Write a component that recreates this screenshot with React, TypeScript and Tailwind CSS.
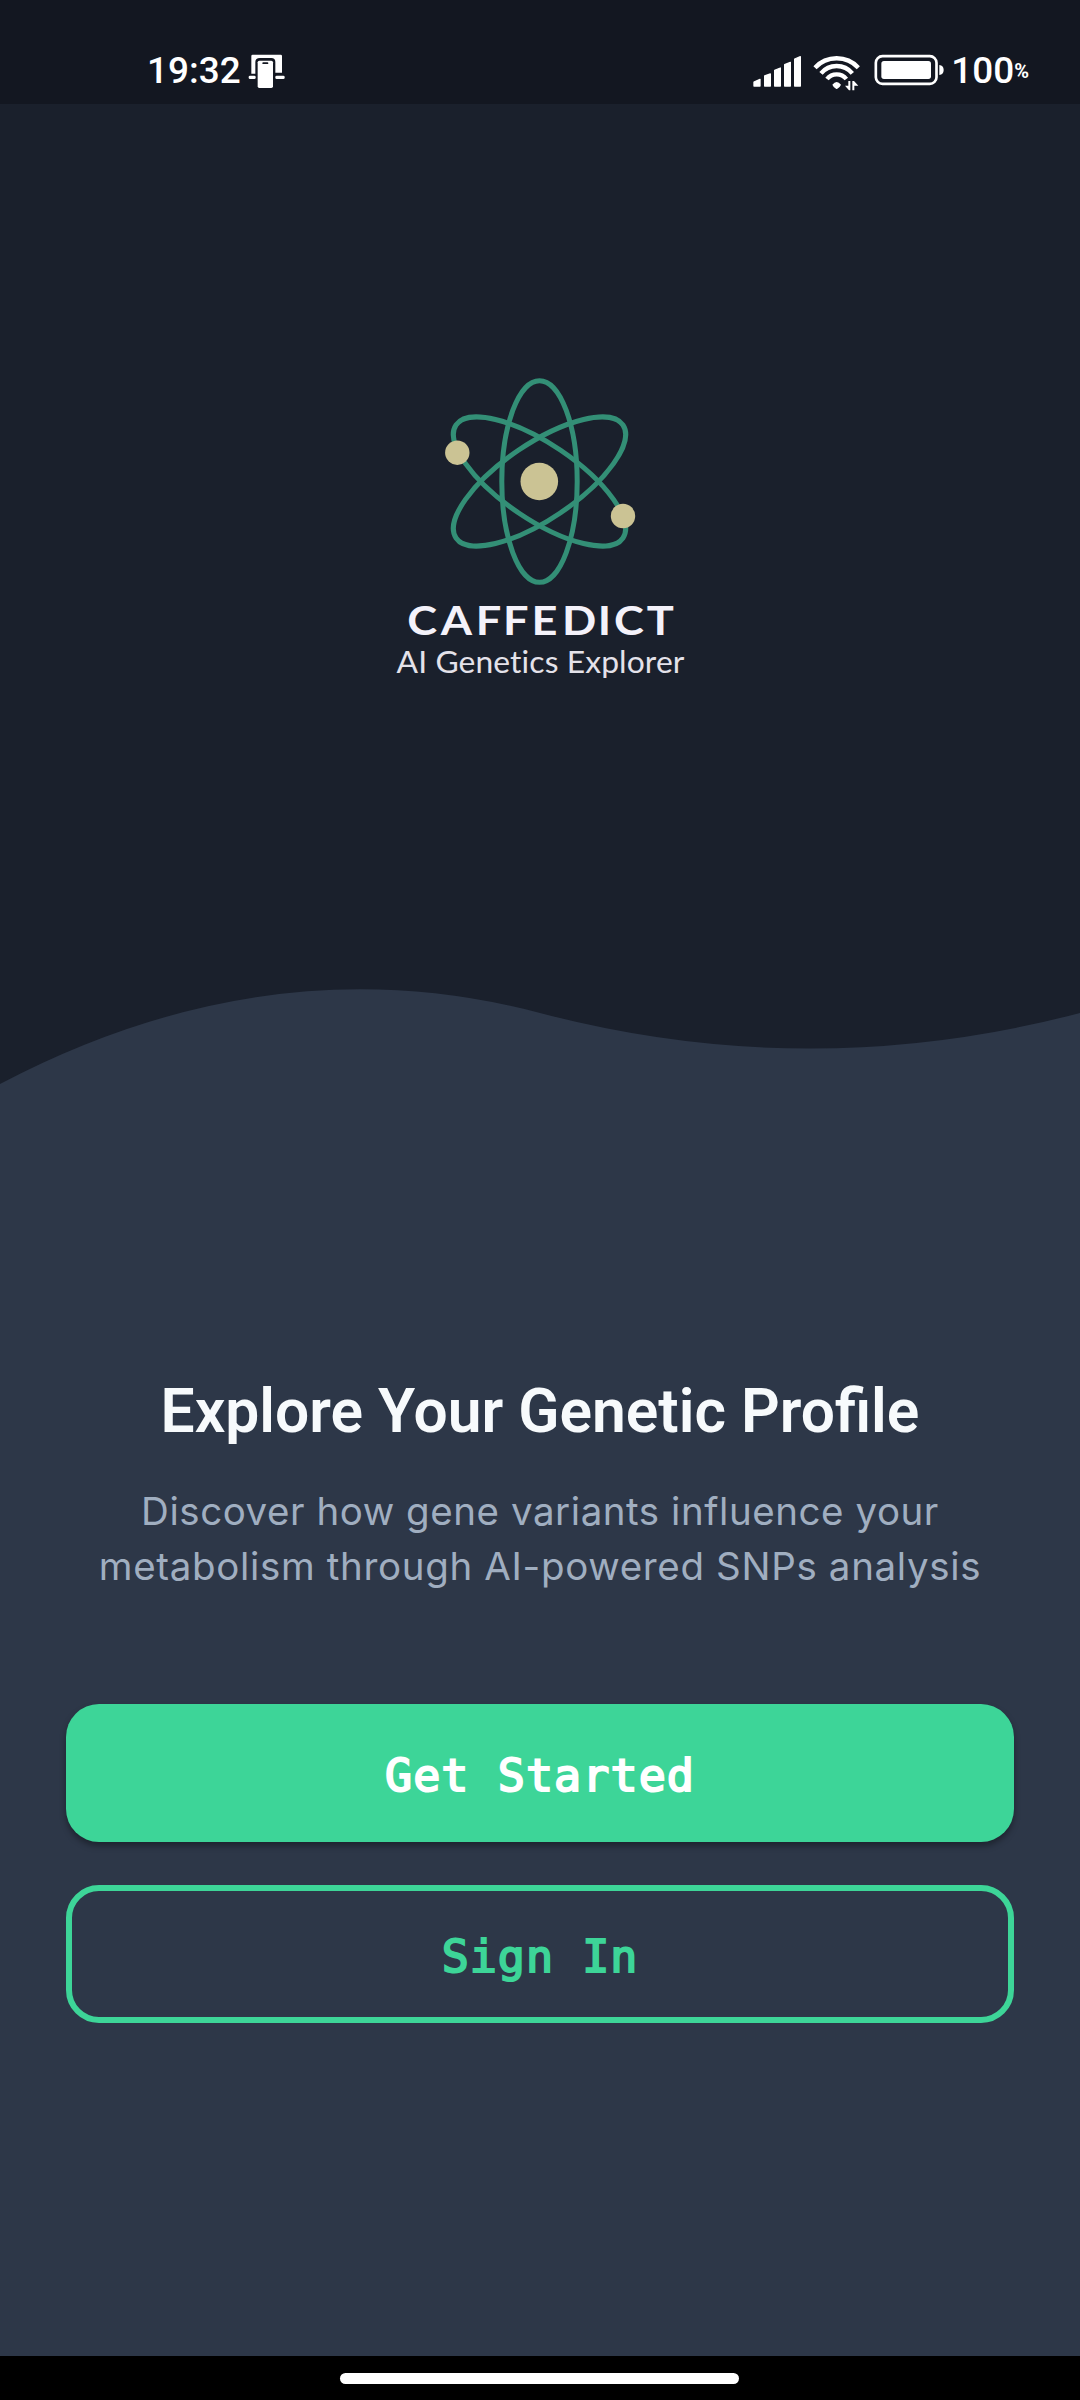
function CastIcon() {
  return (
    <svg className="ml-[7px] h-[36px] w-[38px]" viewBox="352 42 114 108" fill="#fff">
      <path d="M366 44H450Q454 44 454 48V98H434V66Q434 54 422 54H388Q374 54 374 66V101H362V48Q362 44 366 44Z" />
      <rect x="354" y="107" width="21" height="10" rx="4" />
      <rect x="434" y="107" width="28" height="10" rx="4" />
      <rect x="381" y="62" width="46" height="82" rx="5" />
      <rect x="395" y="67" width="18" height="5" rx="2.5" fill="#131721" />
    </svg>
  );
}

function SignalIcon() {
  return (
    <svg className="h-[34px] w-[52px]" viewBox="36 39 156 102" fill="#fff" stroke="#fff" strokeWidth="4" strokeLinejoin="round">
      <path d="M42 123L60 115V135H42ZM74 105L91 99V135H74ZM104 88L121 81V135H104ZM134 71L151 64V135H134ZM164 54L181 47V135H164Z" />
    </svg>
  );
}

function WifiIcon() {
  return (
    <svg className="ml-[7px] h-[38px] w-[50px]" viewBox="214 36 150 114" fill="none" stroke="#fff" strokeWidth="13">
      <path d="M226 77A89 89 0 0 1 356 77" />
      <path d="M244 94A61 61 0 0 1 338 94" />
      <path d="M262 111A37 37 0 0 1 320 111" />
      <path d="M278 128Q291 112 304 128Q302 134 293 140Q291 141.500 289 140Q280 134 278 128Z" fill="#fff" stroke="none" />
      <path d="M326 117H332V145H328L316 131H326ZM338 117H343L356 131H344V145H338Z" fill="#fff" stroke="none" />
    </svg>
  );
}

function BatteryIcon() {
  return (
    <svg className="ml-[13px] h-[32px] w-[70px]" viewBox="403 42 210 96" fill="#fff">
      <rect x="408.5" y="48.500" width="182" height="83" rx="20" fill="none" stroke="#fff" strokeWidth="8" />
      <rect x="425" y="63" width="149" height="54" rx="8" />
      <path d="M599 75Q612 76 612 90Q612 104 599 105Z" />
    </svg>
  );
}

function StatusBar() {
  return (
    <div className="flex h-[104px] items-start bg-[#131721] pl-[147px] pt-[50px] font-['Roboto',sans-serif] text-[36.900px] font-medium leading-[42px] text-white">
      <span>19:32</span>
      <div className="mt-[4px]"><CastIcon /></div>
      <div className="ml-auto mt-[4px] flex items-start">
        <SignalIcon />
        <WifiIcon />
        <BatteryIcon />
      </div>
      <span className="ml-[7px]">100</span>
      <span className="mr-[51px] text-[20px] font-bold">%</span>
    </div>
  );
}

function Logo() {
  return (
    <svg className="h-[320px] w-[300px]" viewBox="390 370 300 320" role="img" aria-label="Caffedict">
      <g fill="none" stroke="#338f76" strokeWidth="5">
        <ellipse cx="539.5" cy="481.500" rx="37.700" ry="100.800" />
        <ellipse cx="539.5" cy="481.500" rx="100.800" ry="37.700" transform="rotate(34.1 539.5 481.5)" />
        <ellipse cx="539.5" cy="481.500" rx="100.800" ry="37.700" transform="rotate(-34.1 539.5 481.5)" />
      </g>
      <g fill="#cbc394">
        <circle cx="539.300" cy="481.500" r="18.800" />
        <circle cx="457.300" cy="452.700" r="12.200" />
        <circle cx="623" cy="516" r="12.200" />
      </g>
      <g fill="#f4f2fa" fontFamily="Lato, sans-serif">
        <text
          transform="scale(1.1 1)"
          x="370.2 400.6 432.4 457.2 483.1 511 543.5 558.2 588"
          y="634.700"
          fontSize="41"
          fontWeight="700"
        >
          CAFFEDICT
        </text>
        <text x="396.500" y="673" fontSize="31" letterSpacing="0.1" textLength="288" lengthAdjust="spacingAndGlyphs" fill="#e4e2ea">
          AI Genetics Explorer
        </text>
      </g>
    </svg>
  );
}

export default function App() {
  return (
    <div className="flex h-[2400px] w-[1080px] flex-col overflow-hidden bg-[#2d3748]">
      <StatusBar />
      <header className="flex h-[980px] flex-col items-center bg-[#1a202c] pt-[266px]">
        <Logo />
        <svg className="mt-auto h-[104px] w-[1080px]" viewBox="0 980 1080 104" fill="#2d3748">
          <path d="M0 1084Q270 942 540 1013T1080 1013V1085H0Z" />
        </svg>
      </header>
      <main className="flex flex-1 flex-col px-[66px] pt-[292px] text-center">
        <h1 className="font-['Roboto',sans-serif] text-[60.500px] font-semibold leading-[72px] text-[#f7fafc]">
          Explore Your Genetic Profile
        </h1>
        <p className="mt-[36px] whitespace-nowrap font-['Inter',sans-serif] text-[38.500px] leading-[55px] text-[#a0aec0]">
          <span className="block tracking-[0.550px]">Discover how gene variants influence your</span>
          <span className="block tracking-[0.660px]">metabolism through AI-powered SNPs analysis</span>
        </p>
        <button className="mt-[110px] h-[138px] rounded-[33px] bg-[#3dd598] pt-[5px] font-['DejaVu_Sans_Mono',monospace] text-[45px] tracking-[1.100px] text-white shadow-[0_4px_6px_rgba(0,0,0,0.35)] [-webkit-text-stroke:2px_#fff]">
          Get Started
        </button>
        <button className="mt-[43px] h-[138px] rounded-[33px] border-[6px] border-[#3dd598] pt-[5px] font-['DejaVu_Sans_Mono',monospace] text-[45px] tracking-[1px] text-[#3dd598] [-webkit-text-stroke:2px_#3dd598]">
          Sign In
        </button>
      </main>
      <footer className="flex h-[44px] justify-center bg-black pt-[17px]">
        <div className="-ml-px h-[11px] w-[399px] rounded-full bg-white" />
      </footer>
    </div>
  );
}
